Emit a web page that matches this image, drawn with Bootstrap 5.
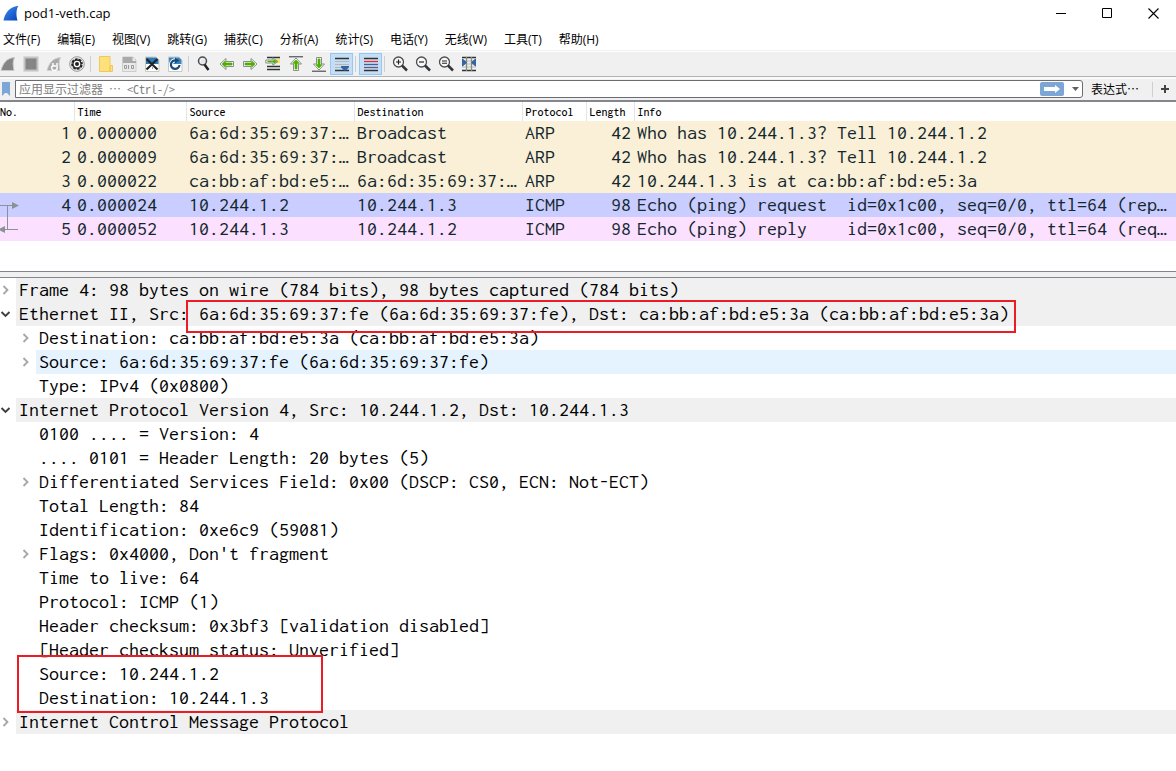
<!DOCTYPE html>
<html lang="zh-CN">
<head>
<meta charset="utf-8">
<meta name="viewport" content="width=device-width, initial-scale=1">
<title>pod1-veth.cap</title>
<link rel="stylesheet" href="https://cdn.jsdelivr.net/npm/bootstrap@5.3.0/dist/css/bootstrap.min.css">
<style>
  :root {
    --ui: "Open Sans", "Noto Sans CJK SC", sans-serif;
    --fixed-ui: "Noto Sans Mono CJK SC", "Noto Sans CJK SC", monospace;
    --capture: Inconsolata, "Liberation Mono", monospace;
  }
  body { font: 12px/16px var(--ui); color: #000; background: #fff; overflow-x: hidden; }
  button { border: 0; padding: 0; background: none; color: inherit; }
  svg { display: block; }

  .title-bar { height: 26px; padding-left: 3px; }
  .title-text { font-size: 13px; padding: 0 0 1px 5px; }
  .win-btn { width: 46px; height: 26px; }
  .menu-bar { height: 25px; gap: 17px; padding: 3px 3px 0; border-bottom: 1px solid #f0f0f0; margin-bottom: 1px; }
  .menu-bar a { color: #000; text-decoration: none; white-space: nowrap; }

  .tool-bar { background: #f0f0f0; border-bottom: 1px solid #b4b4b4; height: 25px; overflow: hidden; }
  .tool-group { margin-left: -4px; height: 24px; }
  .tool { width: 23px; height: 22px; display: flex; align-items: center; justify-content: center; border: 1px solid transparent; }
  .tool.active { background: #c5def5; border-color: #90c8f6; }
  .tool-sep { width: 1px; height: 16px; margin: 0 3px 0 2px; background: #cfcfcf; }

  .filter-bar { background: #f0f0f0; border-top: 2px solid #fafafa; border-bottom: 2px solid #85858f; padding: 1px 0 2px; height: 25px; }
  .bookmark { width: 15px; }
  .filter-box { border: 1px solid #6c6c70; border-radius: 0 3px 3px 0; background: #fff; height: 18px; }
  .filter-box input { border: 0; outline: 0; padding: 0 3px; font: 12px/16px var(--fixed-ui); height: 16px; min-width: 0; }
  .filter-box input::placeholder { color: #808080; opacity: 1; }
  .apply { width: 24px; height: 14px; background: #7ba6d6; border-radius: 2px; }
  .caret-btn { width: 18px; }
  .expr { font: 12px/16px var(--fixed-ui); padding: 0 13px 0 8px; white-space: nowrap; }
  .plus { width: 24px; height: 15px; border-left: 1px solid #cfcfcf; }

  .packets { table-layout: fixed; width: 100%; border-collapse: collapse; font: 20px/24px var(--capture); color: #12272e; }
  .packets th { font: 500 12px/18px var(--capture); color: #000; height: 19px; padding: 1px 3px 0; border-right: 1px solid #e5e5e5; }
  .packets th:first-child { padding-left: 0; }
  .packets th:last-child { border-right: 0; }
  .packets td { padding: 0 3px; height: 24px; white-space: pre; overflow: hidden; text-overflow: ellipsis; }
  .packets td:last-child { padding-right: 0; }
  .row-arp { background: #faf0d7; }
  .row-selected { background: #cacdff; }
  .row-reply { background: #fce0ff; }
  .packets td.related { position: relative; overflow: visible; }
  .related svg { position: absolute; left: 0; top: 7px; }
  .packet-pane { padding-bottom: 30px; }
  .splitter { height: 7px; background: #f0f0f0; border: 1px solid #85858f; border-width: 1px 0; }

  .tree, .tree ul { list-style: none; margin: 0; padding: 0; }
  .tree { font: 20px/24px var(--capture); }
  .tree ul .node { padding-left: 20px; }
  .node { display: flex; align-items: center; }
  .toggle { flex: 0 0 16px; height: 24px; display: flex; align-items: center; }
  .caption { flex: 1 1 auto; padding-left: 3px; white-space: pre; }
  .tree > li > .node > .caption { background: #f0f0f0; }
  .tree .hovered .caption { background: #e5f3ff; }
  .anchor { position: relative; }
  .frame-mark { position: absolute; border: 2px solid #ed1c24; pointer-events: none; }
  .mark-mac { left: -13px; right: -7px; top: -3px; height: 33px; }
  .mark-ip { left: 17px; width: 306px; top: -7px; height: 58px; }
</style>
</head>
<body>
<svg width="0" height="0" class="position-absolute" aria-hidden="true">
  <defs>
    <linearGradient id="blueFin" x1="0" y1="0" x2="1" y2="1"><stop offset="0" stop-color="#3f93f5"/><stop offset="1" stop-color="#0a3fb5"/></linearGradient>
    <g id="left"><path d="M1 8 7 2.500v3h7.500v5H7v3z" fill="#fff" stroke="#8b8d89"/><path d="M3 8 6.300 5V7h6.700v2H6.300v2z" fill="#4cb000" stroke="#4cb000" stroke-width=".8"/></g>
    <g id="lens"><circle cx="6.500" cy="6" r="5" fill="#f8f8f8" stroke="#4a4e50" stroke-width="1.300"/><path d="m10 9.500 5 5" stroke="#30363a" stroke-width="2.500"/></g>
    <g id="page"><path d="M1.500 1h10.500L15 4v11.500H1.500z" fill="#fff" stroke="#c9c9c0"/></g>
    <path id="closed" d="m3.500 4 4 4-4 4" fill="none" stroke="#a6a6a6" stroke-width="1.800"/>
    <path id="open" d="m1.500 6 4 4 4-4" fill="none" stroke="#404040" stroke-width="1.900"/>
  </defs>
</svg>

<header class="title-bar d-flex align-items-center">
  <svg width="16" height="16" viewBox="0 0 16 16"><path d="M.5 15.500C2 8 6 2 15.500.7 13 4 13 10 14.500 15.500z" fill="url(#blueFin)"/></svg>
  <span class="title-text">pod1-veth.cap</span>
  <div class="ms-auto d-flex me-n1">
    <button class="win-btn" aria-label="最小化"><svg class="mx-auto" width="11" height="11"><path d="M0 5.500h10" stroke="#000"/></svg></button>
    <button class="win-btn" aria-label="最大化"><svg class="mx-auto" width="11" height="11"><path d="M.5.5h9v9h-9z" fill="none" stroke="#000"/></svg></button>
    <button class="win-btn" aria-label="关闭"><svg class="mx-auto" width="11" height="11"><path d="m.5.5 10 10m0-10-10 10" stroke="#000" stroke-width="1.100"/></svg></button>
  </div>
</header>

<nav class="menu-bar d-flex align-items-center">
  <a href="#">文件(F)</a><a href="#">编辑(E)</a><a href="#">视图(V)</a><a href="#">跳转(G)</a><a href="#">捕获(C)</a><a href="#">分析(A)</a><a href="#">统计(S)</a><a href="#">电话(Y)</a><a href="#">无线(W)</a><a href="#">工具(T)</a><a href="#">帮助(H)</a>
</nav>

<div class="tool-bar">
 <div class="tool-group d-flex align-items-center">
  <button class="tool" aria-label="开始捕获"><svg width="16" height="16"><path d="M1 14.500C3 7 7 2 14.500 1.500 12.500 5 13 10 14 14.500z" fill="#858585" stroke="#c8c8c8"/></svg></button>
  <button class="tool" aria-label="停止捕获"><svg width="16" height="16"><path d="M1.500 1.500h13v13h-13z" fill="#858585" stroke="#c4c4c4" stroke-width="2"/></svg></button>
  <button class="tool" aria-label="重新开始捕获"><svg width="16" height="16"><path d="M1 14.500C3 7 7 2 14.500 1.500 12.500 5 13 10 14 14.500z" fill="#aaa" stroke="#d0d0d0"/><path d="M11 7v4a2.700 2.700 0 1 1-4-1.500M7 7v3h3" fill="none" stroke="#fff" stroke-width="1.500"/></svg></button>
  <button class="tool" aria-label="捕获选项"><svg width="16" height="16"><circle cx="8" cy="8" r="7.300" fill="#eee" stroke="#999"/><circle cx="8" cy="8" r="4.600" fill="#fff" stroke="#222" stroke-width="2.500"/><circle cx="8" cy="8" r="5.300" fill="none" stroke="#eee" stroke-width="1.300" stroke-dasharray="1.200 2.960"/><circle cx="8" cy="8" r="2" fill="#222"/></svg></button>
  <span class="tool-sep"></span>
  <button class="tool" aria-label="打开"><svg width="16" height="16"><path d="M1.500.5h10.500v9h2.500v6h-13z" fill="#ffe17c" stroke="#eec85c"/><path d="M12 10v5" stroke="#e4b94d"/></svg></button>
  <button class="tool" aria-label="保存"><svg width="16" height="16"><path d="M1.500 1h10.500L15 4v11.500H1.500z" fill="#e9e9e9" stroke="#ccc"/><path d="M2 1h9.500v4H15v2H2z" fill="#aaa"/><path d="M3.500 9.500h2v3h-2zM7.500 9v4M10.500 9.500h2v3h-2z" fill="none" stroke="#999"/></svg></button>
  <button class="tool" aria-label="关闭文件"><svg width="16" height="16"><use href="#page"/><path d="M2 1.500h10L14.500 4v4H2z" fill="#3078b4"/><path d="M4 11h1v2H4zm4 0h1v2H8zm3 0h1v2h-1z" fill="#99a"/><path d="m2.500 3 11 10.500m0-10.500-11 10.500" stroke="#1e2529" stroke-width="2.200"/></svg></button>
  <button class="tool" aria-label="重新加载"><svg width="16" height="16"><use href="#page"/><path d="M2 1.500h10L14.500 4v4H2z" fill="#3a85bd"/><path d="M12.500 9A4.300 4.300 0 1 1 9 4.400" fill="none" stroke="#fff" stroke-width="4"/><path d="M12.500 9A4.300 4.300 0 1 1 9 4.400" fill="none" stroke="#174a80" stroke-width="2.200"/><path d="m8 1.500 4.500 3L8 7.500z" fill="#174a80"/></svg></button>
  <span class="tool-sep"></span>
  <button class="tool" aria-label="查找分组"><svg width="16" height="16"><circle cx="6.500" cy="5" r="4" fill="#e4e8ea" stroke="#4a4e50" stroke-width="1.500"/><path d="M4.500 5.500a2 2 0 0 1 2-2.500" fill="none" stroke="#fff"/><path d="m8.500 8.500 4 5.500" stroke="#222" stroke-width="2.500"/></svg></button>
  <button class="tool" aria-label="上一分组"><svg width="16" height="16"><use href="#left"/></svg></button>
  <button class="tool" aria-label="下一分组"><svg width="16" height="16"><use href="#left" transform="matrix(-1 0 0 1 16 0)"/></svg></button>
  <button class="tool" aria-label="转到分组"><svg width="16" height="16"><path d="M2 1.500h13M2 10.500h13M2 13.500h13" stroke="#2e3436" stroke-width="1.300"/><path d="M11 3h4v4h-4z" fill="#fce94f"/><path d="M.8 4h7V1.800L13 5.500 7.800 9.200V7h-7z" fill="#fff" stroke="#8b8d89"/><path d="M2.500 5.500H11M8.500 3.700l2.500 1.800-2.500 1.800" fill="none" stroke="#4cb000" stroke-width="1.300"/></svg></button>
  <button class="tool" aria-label="首个分组"><svg width="16" height="16"><path d="M1 .8h14" stroke="#2e3436"/><path d="m8 2 5.500 6h-3v6.500h-5V8h-3z" fill="#fff" stroke="#8b8d89"/><path d="m8 4 3 3.300H9V13H7V7.300H5z" fill="#4cb000" stroke="#4cb000" stroke-width=".8"/></svg></button>
  <button class="tool" aria-label="最新分组"><svg width="16" height="16"><path d="M1 15.200h14" stroke="#2e3436"/><path d="m8 14 5.500-6h-3V1.500h-5V8h-3z" fill="#fff" stroke="#8b8d89"/><path d="m8 12 3-3.300H9V3H7v5.700H5z" fill="#4cb000" stroke="#4cb000" stroke-width=".8"/></svg></button>
  <button class="tool active" aria-label="自动滚动"><svg width="16" height="16"><path d="M1 2.500h14M1 14.500h14" stroke="#2e3436" stroke-width="1.300"/><path d="M1 5.500h14M1 8.500h14M1 11.500h14" stroke="#b5b9b4" stroke-width="1.200"/><path d="M7 10h8c0 3-1.500 2-3 4.500h-2C8.500 12 7 13 7 10z" fill="#3465a4"/></svg></button>
  <span class="tool-sep"></span>
  <button class="tool active" aria-label="着色"><svg width="16" height="16"><path d="M1 2.500h14M1 14.500h14" stroke="#2e3436" stroke-width="1.300"/><path d="M1 5.500h14" stroke="#ef2929" stroke-width="1.300"/><path d="M1 8.500h14" stroke="#3465a4" stroke-width="1.300"/><path d="M1 11.500h14" stroke="#75507b" stroke-width="1.300"/></svg></button>
  <span class="tool-sep"></span>
  <button class="tool" aria-label="放大"><svg width="16" height="16"><use href="#lens"/><path d="M4 6h5M6.500 3.500v5" stroke="#222" stroke-width="1.200"/></svg></button>
  <button class="tool" aria-label="缩小"><svg width="16" height="16"><use href="#lens"/><path d="M4 6h5" stroke="#222" stroke-width="1.200"/></svg></button>
  <button class="tool" aria-label="原始大小"><svg width="16" height="16"><use href="#lens"/><path d="M4 5h5M4 7.200h5" stroke="#222" stroke-width="1.100"/></svg></button>
  <button class="tool" aria-label="调整列宽"><svg width="16" height="16"><path d="M1 1.500h14M1 14.500h14" stroke="#2e3436" stroke-width="1.400"/><path d="M1 5h14M1 8h14M1 11h14" stroke="#babdb6"/><path d="M5.500 1v14M10.500 1v14" stroke="#888a85" stroke-width="1.300"/><path d="m1.500 3 4 3.500-4 3.500zM14.500 3l-4 3.500 4 3.500z" fill="#3465a4" stroke="#3465a4"/></svg></button>
 </div>
</div>

<form class="filter-bar d-flex align-items-center" onsubmit="return false">
  <button class="bookmark" type="button" aria-label="书签"><svg width="15" height="15"><path d="M2 0h8v14l-3-3H5l-3 3z" fill="#7ba6d6"/></svg></button>
  <div class="filter-box d-flex align-items-center flex-grow-1">
    <input class="flex-grow-1" type="text" aria-label="显示过滤器" placeholder="应用显示过滤器 … &lt;Ctrl-/&gt;">
    <button class="apply" type="submit" aria-label="应用"><svg width="24" height="14"><path d="M4 5h11V3l5 4-5 4V9H4z" fill="#fff"/></svg></button>
    <button class="caret-btn" type="button" aria-label="历史"><svg class="ms-2" width="7" height="4"><path d="M0 0h7L3.500 4z" fill="#606060"/></svg></button>
  </div>
  <button class="expr" type="button">表达式…</button>
  <button class="plus" type="button" aria-label="添加"><svg class="mx-auto" width="8" height="8"><path d="M0 4h8M4 0v8" stroke="#444" stroke-width="2"/></svg></button>
</form>

<main>
  <section class="packet-pane">
    <table class="packets">
      <colgroup><col style="width:74px"><col style="width:112px"><col style="width:168px"><col style="width:168px"><col style="width:64px"><col style="width:48px"><col></colgroup>
      <thead><tr><th>No.</th><th>Time</th><th>Source</th><th>Destination</th><th>Protocol</th><th>Length</th><th>Info</th></tr></thead>
      <tbody>
        <tr class="row-arp"><td class="text-end">1</td><td>0.000000</td><td>6a:6d:35:69:37:…</td><td>Broadcast</td><td>ARP</td><td class="text-end">42</td><td>Who has 10.244.1.3? Tell 10.244.1.2</td></tr>
        <tr class="row-arp"><td class="text-end">2</td><td>0.000009</td><td>6a:6d:35:69:37:…</td><td>Broadcast</td><td>ARP</td><td class="text-end">42</td><td>Who has 10.244.1.3? Tell 10.244.1.2</td></tr>
        <tr class="row-arp"><td class="text-end">3</td><td>0.000022</td><td>ca:bb:af:bd:e5:…</td><td>6a:6d:35:69:37:…</td><td>ARP</td><td class="text-end">42</td><td>10.244.1.3 is at ca:bb:af:bd:e5:3a</td></tr>
        <tr class="row-selected"><td class="text-end related"><svg width="20" height="34"><path d="M0 5.500h13M7.500 5.500v24M5 29.500h13" stroke="#8a9296" fill="none"/><path d="m12 2 7 3.500L12 9zM5 26l-7 3.500L5 33z" fill="#8a9296"/></svg>4</td><td>0.000024</td><td>10.244.1.2</td><td>10.244.1.3</td><td>ICMP</td><td class="text-end">98</td><td>Echo (ping) request  id=0x1c00, seq=0/0, ttl=64 (rep…</td></tr>
        <tr class="row-reply"><td class="text-end">5</td><td>0.000052</td><td>10.244.1.3</td><td>10.244.1.2</td><td>ICMP</td><td class="text-end">98</td><td>Echo (ping) reply    id=0x1c00, seq=0/0, ttl=64 (req…</td></tr>
      </tbody>
    </table>
  </section>
  <div class="splitter"></div>
  <ul class="tree">
    <li><div class="node"><button class="toggle" aria-label="展开"><svg width="12" height="16"><use href="#closed"/></svg></button><span class="caption">Frame 4: 98 bytes on wire (784 bits), 98 bytes captured (784 bits)</span></div></li>
    <li><div class="node"><button class="toggle" aria-label="折叠"><svg width="12" height="16"><use href="#open"/></svg></button><span class="caption">Ethernet II, Src: <span class="anchor">6a:6d:35:69:37:fe (6a:6d:35:69:37:fe), Dst: ca:bb:af:bd:e5:3a (ca:bb:af:bd:e5:3a)<span class="frame-mark mark-mac"></span></span></span></div>
      <ul>
        <li class="node"><button class="toggle" aria-label="展开"><svg width="12" height="16"><use href="#closed"/></svg></button><span class="caption">Destination: ca:bb:af:bd:e5:3a (ca:bb:af:bd:e5:3a)</span></li>
        <li class="node hovered"><button class="toggle" aria-label="展开"><svg width="12" height="16"><use href="#closed"/></svg></button><span class="caption">Source: 6a:6d:35:69:37:fe (6a:6d:35:69:37:fe)</span></li>
        <li class="node"><span class="toggle"></span><span class="caption">Type: IPv4 (0x0800)</span></li>
      </ul>
    </li>
    <li><div class="node"><button class="toggle" aria-label="折叠"><svg width="12" height="16"><use href="#open"/></svg></button><span class="caption">Internet Protocol Version 4, Src: 10.244.1.2, Dst: 10.244.1.3</span></div>
      <ul>
        <li class="node"><span class="toggle"></span><span class="caption">0100 .... = Version: 4</span></li>
        <li class="node"><span class="toggle"></span><span class="caption">.... 0101 = Header Length: 20 bytes (5)</span></li>
        <li class="node"><button class="toggle" aria-label="展开"><svg width="12" height="16"><use href="#closed"/></svg></button><span class="caption">Differentiated Services Field: 0x00 (DSCP: CS0, ECN: Not-ECT)</span></li>
        <li class="node"><span class="toggle"></span><span class="caption">Total Length: 84</span></li>
        <li class="node"><span class="toggle"></span><span class="caption">Identification: 0xe6c9 (59081)</span></li>
        <li class="node"><button class="toggle" aria-label="展开"><svg width="12" height="16"><use href="#closed"/></svg></button><span class="caption">Flags: 0x4000, Don't fragment</span></li>
        <li class="node"><span class="toggle"></span><span class="caption">Time to live: 64</span></li>
        <li class="node"><span class="toggle"></span><span class="caption">Protocol: ICMP (1)</span></li>
        <li class="node"><span class="toggle"></span><span class="caption">Header checksum: 0x3bf3 [validation disabled]</span></li>
        <li class="node"><span class="toggle"></span><span class="caption">[Header checksum status: Unverified]</span></li>
        <li class="node anchor"><span class="toggle"></span><span class="caption">Source: 10.244.1.2</span><span class="frame-mark mark-ip"></span></li>
        <li class="node"><span class="toggle"></span><span class="caption">Destination: 10.244.1.3</span></li>
      </ul>
    </li>
    <li><div class="node"><button class="toggle" aria-label="展开"><svg width="12" height="16"><use href="#closed"/></svg></button><span class="caption">Internet Control Message Protocol</span></div></li>
  </ul>
</main>
<script src="https://cdn.jsdelivr.net/npm/bootstrap@5.3.0/dist/js/bootstrap.bundle.min.js"></script>
</body>
</html>
